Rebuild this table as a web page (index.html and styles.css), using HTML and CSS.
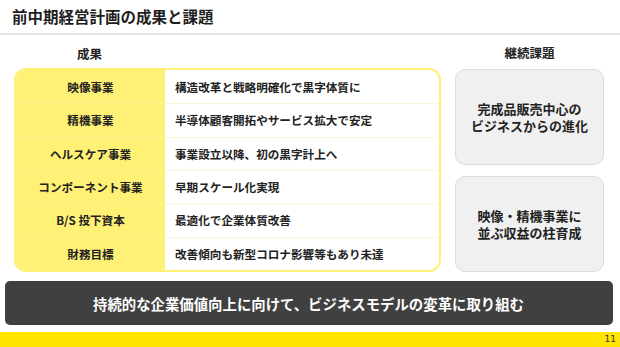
FILE: index.html
```html
<!DOCTYPE html>
<html lang="ja">
<head>
<meta charset="utf-8">
<link rel="stylesheet" href="styles.css">
</head>
<body>
<div class="slide">
  <header class="header">
    <h1 class="title">前中期経営計画の成果と課題</h1>
  </header>
  <main class="main">
    <section class="results">
      <div class="col-head"><span class="col-head-label">成果</span></div>
      <div class="table">
        <div class="row"><div class="label">映像事業</div><div class="value">構造改革と戦略明確化で黒字体質に</div></div>
        <div class="row"><div class="label">精機事業</div><div class="value">半導体顧客開拓やサービス拡大で安定</div></div>
        <div class="row"><div class="label">ヘルスケア事業</div><div class="value">事業設立以降、初の黒字計上へ</div></div>
        <div class="row"><div class="label">コンポーネント事業</div><div class="value">早期スケール化実現</div></div>
        <div class="row"><div class="label">B/S 投下資本</div><div class="value">最適化で企業体質改善</div></div>
        <div class="row"><div class="label">財務目標</div><div class="value">改善傾向も新型コロナ影響等もあり未達</div></div>
      </div>
    </section>
    <section class="issues">
      <div class="col-head center">継続課題</div>
      <div class="boxes">
        <div class="box"><span class="box-line">完成品販売中心の</span><span class="box-line">ビジネスからの進化</span></div>
        <div class="box"><span class="box-line">映像・精機事業に</span><span class="box-line">並ぶ収益の柱育成</span></div>
      </div>
    </section>
  </main>
  <div class="banner">持続的な企業価値向上に向けて、ビジネスモデルの変革に取り組む</div>
  <footer class="footer"><span class="page">11</span></footer>
</div>
</body>
</html>
```

FILE: styles.css
```css
* { box-sizing: border-box; margin: 0; padding: 0; }
html, body { width: 620px; height: 347px; overflow: hidden; background: #fff; }
body {
  font-family: "Noto Sans CJK JP", "Noto Sans", sans-serif;
  color: #222;
}
.slide {
  width: 620px;
  height: 347px;
  display: flex;
  flex-direction: column;
}
.header {
  height: 35px;
  border-bottom: 2px solid #e6e6e6;
  padding-left: 12px;
  display: flex;
  align-items: center;
}
.title {
  font-size: 15.5px;
  font-weight: 700;
  color: #1e1e1e;
  line-height: 1;
  padding-top: 1px;
}
.main {
  display: grid;
  grid-template-columns: 427px 149px;
  column-gap: 14px;
  padding-left: 14px;
  height: 237px;
}
.results, .issues {
  display: flex;
  flex-direction: column;
}
.col-head {
  height: 33px;
  display: flex;
  align-items: center;
  font-size: 12.5px;
  font-weight: 700;
  color: #222;
  padding-top: 3px;
}
.col-head-label {
  width: 151px;
  text-align: center;
}
.col-head.center { justify-content: center; padding-top: 2px; }
.table {
  flex: 1;
  border: 2px solid #fff176;
  border-radius: 12px;
  overflow: hidden;
  display: grid;
  grid-template-rows: repeat(6, 1fr);
}
.row {
  display: grid;
  grid-template-columns: 149px 1fr;
}
.label {
  background: #fff176;
  display: flex;
  align-items: center;
  justify-content: center;
  font-size: 11.6px;
  font-weight: 700;
  color: #222;
}
.value {
  display: flex;
  align-items: center;
  padding-left: 10px;
  font-size: 11.6px;
  font-weight: 700;
  color: #222;
}
.row + .row .value { border-top: 1px solid #fdf7d6; }
.row + .row .label { border-top: 1px solid #fff38c; }
.boxes {
  flex: 1;
  display: flex;
  flex-direction: column;
  gap: 11px;
  padding-top: 1px;
}
.box {
  flex: 1;
  background: #f0f0f0;
  border: 1px solid #dcdcdc;
  border-radius: 10px;
  display: flex;
  flex-direction: column;
  align-items: center;
  justify-content: center;
  text-align: center;
  font-size: 13px;
  font-weight: 700;
  color: #222;
}
.box-line {
  display: block;
  line-height: 17px;
  height: 17px;
}
.banner {
  margin: 9px 7px 0 5px;
  height: 44px;
  background: #404040;
  border-radius: 5px;
  color: #fff;
  font-size: 14.4px;
  font-weight: 700;
  display: flex;
  align-items: center;
  justify-content: center;
  padding-right: 1px;
}
.footer {
  margin-top: 7px;
  flex: 1;
  background: #ffe500;
  display: flex;
  align-items: center;
  justify-content: flex-end;
  padding-right: 4px;
}
.page {
  font-family: "DejaVu Sans", sans-serif;
  font-size: 9px;
  color: #333;
  line-height: 1;
}
```
